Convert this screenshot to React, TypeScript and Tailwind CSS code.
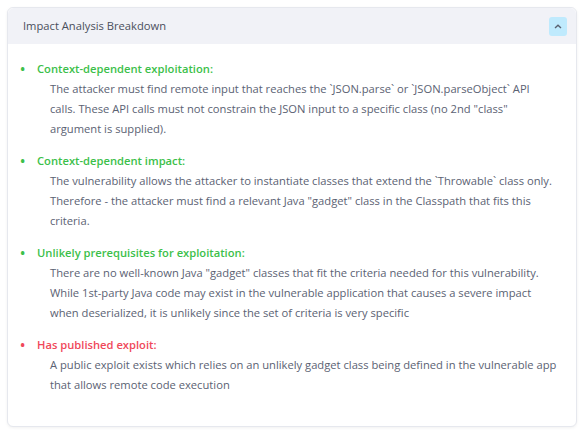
import React from "react";

type Finding = {
  title: string;
  body: string;
  severity: "ok" | "bad";
};

const findings: Finding[] = [
  {
    title: "Context-dependent exploitation:",
    body:
      'The attacker must find remote input that reaches the `JSON.parse` or `JSON.parseObject` API calls. These API calls must not constrain the JSON input to a specific class (no 2nd "class" argument is supplied).',
    severity: "ok",
  },
  {
    title: "Context-dependent impact:",
    body:
      'The vulnerability allows the attacker to instantiate classes that extend the `Throwable` class only. Therefore - the attacker must find a relevant Java "gadget" class in the Classpath that fits this criteria.',
    severity: "ok",
  },
  {
    title: "Unlikely prerequisites for exploitation:",
    body:
      'There are no well-known Java "gadget" classes that fit the criteria needed for this vulnerability. While 1st-party Java code may exist in the vulnerable application that causes a severe impact when deserialized, it is unlikely since the set of criteria is very specific',
    severity: "ok",
  },
  {
    title: "Has published exploit:",
    body:
      "A public exploit exists which relies on an unlikely gadget class being defined in the vulnerable app that allows remote code execution",
    severity: "bad",
  },
];

export default function App() {
  const [open, setOpen] = React.useState(true);

  return (
    <div className="min-h-screen bg-white p-[7px] font-['Open_Sans',sans-serif]">
      <div className="rounded-md border border-[#e6e8ee] bg-white shadow-[0_1px_3px_rgba(0,0,0,0.06)]">
        <div className="flex h-[36px] items-center justify-between rounded-t-md bg-[#f1f2f7] pl-[15px] pr-[9px]">
          <span className="text-[11.2px] text-[#4a4f5c]">Impact Analysis Breakdown</span>
          <button
            className="flex h-[19px] w-[18px] items-center justify-center rounded-[3px] bg-[#bfeafd]"
            onClick={() => setOpen((v) => !v)}
            aria-label="Toggle breakdown"
          >
            <svg width="8" height="5" viewBox="0 0 8 5" className={open ? "" : "rotate-180"}>
              <path d="M1 4 L4 1.3 L7 4" fill="none" stroke="#5a6170" strokeWidth="1.4" />
            </svg>
          </button>
        </div>
        {open && (
          <ul className="pb-[31px] pl-[11px] pr-[18px] pt-[15px]">
            {findings.map((f) => (
              <li key={f.title} className="mb-[12px] last:mb-0">
                <div
                  className={`flex items-center text-[11.2px] font-semibold leading-[20px] ${
                    f.severity === "ok" ? "text-[#3cbf4a]" : "text-[#f0485a]"
                  }`}
                >
                  <span className="w-[18px] pl-[1px] text-[14px]">•</span>
                  {f.title}
                </div>
                <p className="pl-[31px] text-[11.2px] leading-[20px] text-[#5b6273]">{f.body}</p>
              </li>
            ))}
          </ul>
        )}
      </div>
    </div>
  );
}
